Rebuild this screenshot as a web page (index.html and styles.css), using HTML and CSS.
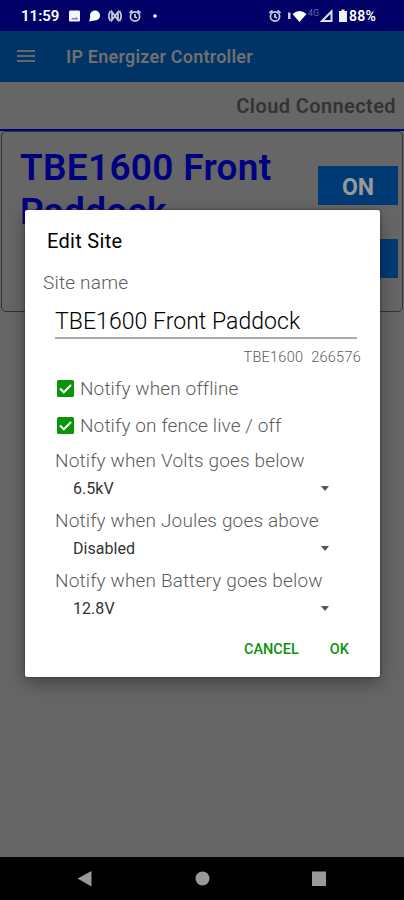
FILE: index.html
```html
<!DOCTYPE html>
<html lang="en">
<head>
<meta charset="utf-8">
<title>IP Energizer Controller</title>
<link rel="stylesheet" href="styles.css">
</head>
<body>
<div class="screen">
  <div class="status">
    <span class="clock">11:59</span>
    <svg class="status-left" width="92" height="16" viewBox="0 0 92 16">
      <rect x="1" y="2.500" width="11" height="11" rx="1.200" fill="#f4f4ff"/>
      <path d="M3 11.500l2-2 1.500 1 2-1.500 1.800 2.500z" fill="#77b"/>
      <circle cx="27" cy="7.500" r="5" fill="#fff"/>
      <path d="M21 13.500l1.500-5 4 4z" fill="#fff"/>
      <g fill="none" stroke="#ccd" stroke-width="1.700">
        <path d="M42.500 3c-2 3-2 7 0 10M51.500 3c2 3 2 7 0 10M44 4v8l3-4zM50 4v8l-3-4z"/>
        <circle cx="67" cy="8.500" r="4.600"/>
        <path d="M67 6v3l2 1M61.500 5l3-2.500M72.500 5l-3-2.500"/>
      </g>
      <circle cx="87" cy="8" r="1.800" fill="#fff"/>
    </svg>
    <svg class="status-right" width="79" height="16" viewBox="0 0 79 16">
      <g fill="none" stroke="#ccd" stroke-width="1.700">
        <circle cx="6" cy="8.500" r="4.600"/>
        <path d="M6 6v3l2 1M.5 5l3-2.500M11.500 5l-3-2.500"/>
      </g>
      <rect x="19" y="4.500" width="2.500" height="6.500" fill="#ccd"/>
      <path d="M23.500 6q7-6 14 0l-7 8z" fill="#fff"/>
      <text x="39" y="7.500" class="net">4G</text>
      <path d="M53 13L62.500 3.500V13z" fill="none" stroke="#dde" stroke-width="2"/>
      <path d="M70 3h2.500V1.500h3V3H78v11h-8z" fill="#eef"/>
    </svg>
    <span class="percent">88%</span>
  </div>
  <header class="appbar">
    <div class="menu"><i></i><i></i><i></i></div>
    <h1>IP Energizer Controller</h1>
  </header>
  <div class="cloud"><span>Cloud Connected</span></div>
  <main class="content">
    <section class="site">
      <h2>TBE1600 Front<br>Paddock</h2>
      <div class="actions">
        <div class="btn"><span>ON</span></div>
        <div class="btn"></div>
      </div>
    </section>
  </main>
  <nav class="navbar">
    <svg width="404" height="43" viewBox="0 0 404 43" fill="#999">
      <path d="M77.500 21.500L91.500 14v15.500z"/>
      <circle cx="202.500" cy="21.500" r="7"/>
      <rect x="312" y="14.500" width="14" height="14.500"/>
    </svg>
  </nav>
  <div class="dialog">
    <h3><span>Edit Site</span></h3>
    <div class="caption"><span>Site name</span></div>
    <div class="field"><span>TBE1600 Front Paddock</span></div>
    <div class="meta"><span>TBE1600</span><span>266576</span></div>
    <div class="check">
      <svg width="17" height="17" viewBox="0 0 17 17"><rect width="17" height="17" rx="1.500" fill="#0a940a"/><path d="M3 8.500l3.800 3.800L14 5" fill="none" stroke="#fff" stroke-width="2"/></svg>
      <span>Notify when offline</span>
    </div>
    <div class="check">
      <svg width="17" height="17" viewBox="0 0 17 17"><rect width="17" height="17" rx="1.500" fill="#0a940a"/><path d="M3 8.500l3.800 3.800L14 5" fill="none" stroke="#fff" stroke-width="2"/></svg>
      <span>Notify on fence live / off</span>
    </div>
    <div class="option"><label>Notify when Volts goes below</label><div class="select"><span>6.5kV</span><i class="caret"></i></div></div>
    <div class="option"><label>Notify when Joules goes above</label><div class="select"><span>Disabled</span><i class="caret"></i></div></div>
    <div class="option"><label>Notify when Battery goes below</label><div class="select"><span>12.8V</span><i class="caret"></i></div></div>
    <div class="buttons"><span>CANCEL</span><span>OK</span></div>
  </div>
</div>
</body>
</html>
```
FILE: styles.css
```css
* { box-sizing: border-box; }
body { margin: 0; font-family: Roboto, sans-serif; }
h1, h2, h3 { margin: 0; }
.screen { position: relative; width: 404px; height: 900px; overflow: hidden; background: #666; display: flex; flex-direction: column; white-space: nowrap; }
.status { height: 31px; background: #000066; color: #fff; display: flex; align-items: center; padding: 1px 0 0 21px; font-size: 15px; font-weight: 600; }
.clock { width: 47px; }
.status-right { margin-left: 109px; }
.net { font-size: 9px; fill: #66a; font-weight: 400; }
.percent { margin-left: 1px; font-size: 14px; letter-spacing: 0.3px; }
.appbar { height: 51px; background: #003366; display: flex; align-items: center; padding: 1px 0 0 17px; color: #707070; }
.menu { width: 18px; display: flex; flex-direction: column; gap: 3px; margin: 0 31px 2px 0; }
.menu i { height: 2px; background: #666; }
.appbar h1 { font-size: 18px; font-weight: 600; line-height: 24px; letter-spacing: 0.22px; }
.cloud { height: 49px; border-bottom: 2px solid #000080; padding: 1px 8px 0 0; display: flex; justify-content: flex-end; align-items: center; color: #333; font-size: 20px; font-weight: 600; letter-spacing: 0.4px; }
.content { flex: 1; }
.site { height: 181px; margin: 0 1px; border: 1px solid #333; border-radius: 5px; display: flex; justify-content: space-between; padding: 14px 4px 0 18px; }
.site h2 { color: #000080; font-size: 37px; line-height: 43.5px; font-weight: 600; letter-spacing: 0.3px; }
.actions { display: flex; flex-direction: column; gap: 34px; padding-top: 20px; }
.btn { width: 80px; height: 39px; background: #003a75; color: #999; font-size: 23px; font-weight: 700; display: flex; align-items: center; justify-content: center; padding-top: 3px; }
.navbar { height: 43px; background: #000; }
.dialog { position: absolute; left: 25px; top: 210px; width: 355px; height: 467px; background: #fff; border-radius: 2px; box-shadow: 0 0 2px #222, 0 6px 18px rgba(0,0,0,.35); padding-top: 19px; color: #5c5c5c; }
.dialog h3 { font-size: 20px; line-height: 24px; font-weight: 400; letter-spacing: 0.3px; color: #000; padding-left: 22px; }
.caption { margin: 18px 0 0 18px; font-size: 19px; line-height: 24px; font-weight: 300; letter-spacing: 0.2px; }
.field { margin: 12px 23px 0 30px; border-bottom: 2px solid #aaa; height: 32px; font-size: 23px; line-height: 30px; font-weight: 300; letter-spacing: 0.05px; color: #000; }
.meta { margin: 9px 19px 0 0; display: flex; justify-content: flex-end; gap: 8px; font-size: 14.5px; line-height: 20px; font-weight: 300; letter-spacing: 0.25px; }
.check { height: 24px; margin: 9px 0 0 32px; display: flex; align-items: center; gap: 6px; font-size: 19px; line-height: 24px; font-weight: 300; letter-spacing: 0.12px; }
.check svg { margin-top: -2px; }
.check + .check { margin-top: 13px; }
.option { height: 60px; padding-left: 30px; font-size: 19px; font-weight: 300; letter-spacing: 0.15px; }
.check + .option { margin-top: 11px; }
.option label { display: block; line-height: 24px; }
.select { margin: 4px 51px 0 18px; display: flex; justify-content: space-between; align-items: center; font-size: 16px; line-height: 24px; font-weight: 400; letter-spacing: 0.05px; color: #333; }
.caret { border: 4.5px solid transparent; border-top: 5px solid #555; border-bottom: 0; margin-bottom: 1px; }
.buttons { margin: 9px 31px 0 0; display: flex; justify-content: flex-end; gap: 31px; font-size: 14.5px; line-height: 24px; font-weight: 500; color: #0a940a; }
```
